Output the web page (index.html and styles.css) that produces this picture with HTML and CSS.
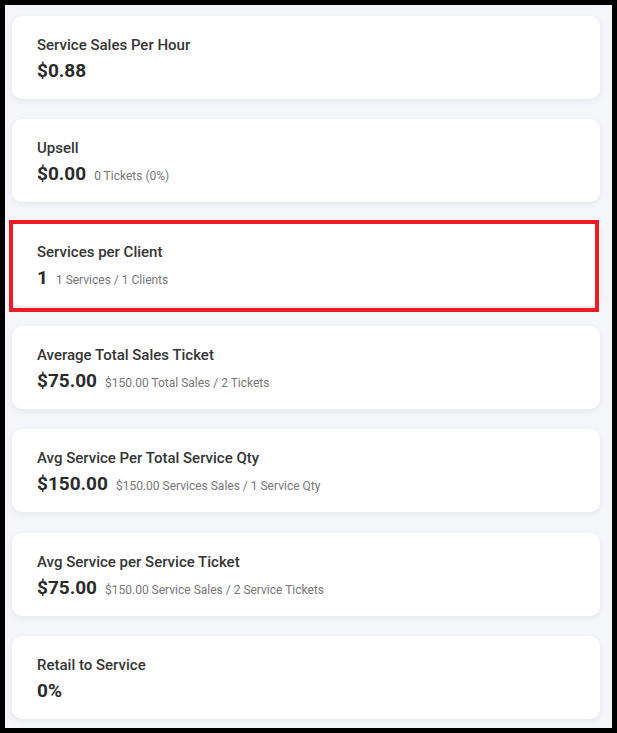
FILE: index.html
```html
<!DOCTYPE html>
<html lang="en">
<head>
  <meta charset="UTF-8" />
  <meta name="viewport" content="width=device-width, initial-scale=1.0" />
  <title>Sales Metrics</title>
  <link rel="stylesheet" href="styles.css">
</head>
<body>
  <div class="screen">
    <div class="metric-list">
      <div class="metric-card">
        <div class="metric-title">Service Sales Per Hour</div>
        <div class="metric-row">
          <span class="metric-value">$0.88</span>
        </div>
      </div>

      <div class="metric-card">
        <div class="metric-title">Upsell</div>
        <div class="metric-row">
          <span class="metric-value">$0.00</span>
          <span class="metric-note">0 Tickets (0%)</span>
        </div>
      </div>

      <div class="metric-card highlighted">
        <div class="metric-title">Services per Client</div>
        <div class="metric-row">
          <span class="metric-value">1</span>
          <span class="metric-note">1 Services / 1 Clients</span>
        </div>
      </div>

      <div class="metric-card">
        <div class="metric-title">Average Total Sales Ticket</div>
        <div class="metric-row">
          <span class="metric-value">$75.00</span>
          <span class="metric-note">$150.00 Total Sales / 2 Tickets</span>
        </div>
      </div>

      <div class="metric-card">
        <div class="metric-title">Avg Service Per Total Service Qty</div>
        <div class="metric-row">
          <span class="metric-value">$150.00</span>
          <span class="metric-note">$150.00 Services Sales / 1 Service Qty</span>
        </div>
      </div>

      <div class="metric-card">
        <div class="metric-title">Avg Service per Service Ticket</div>
        <div class="metric-row">
          <span class="metric-value">$75.00</span>
          <span class="metric-note">$150.00 Service Sales / 2 Service Tickets</span>
        </div>
      </div>

      <div class="metric-card">
        <div class="metric-title">Retail to Service</div>
        <div class="metric-row">
          <span class="metric-value">0%</span>
        </div>
      </div>
    </div>
  </div>
</body>
</html>
```

FILE: styles.css
```css
html, body {
  margin: 0;
  height: 100%;
}

body {
  background: #000;
  padding: 5px;
  box-sizing: border-box;
  font-family: Roboto, 'Liberation Sans', sans-serif;
  color: #2b2b2b;
}

.screen {
  background-color: #f5f6fa;
  height: 723px;
  width: 607px;
  overflow: hidden;
  padding: 11px 12px 0 7px;
  box-sizing: border-box;
}

.metric-list {
  display: flex;
  flex-direction: column;
  gap: 20.33px;
}

.metric-card {
  position: relative;
  background-color: #fff;
  border-radius: 10px;
  box-shadow: 0 2px 6px rgba(40, 50, 90, 0.08);
  padding: 19px 25px 0 25px;
  height: 83px;
  box-sizing: border-box;
}

.metric-card.highlighted::after {
  content: "";
  position: absolute;
  top: -3px;
  left: -3px;
  right: 1px;
  bottom: -6px;
  border: 4px solid #ed1c24;
}

.metric-title {
  font-size: 15px;
  font-weight: 500;
  line-height: 20px;
  color: #353535;
}

.metric-row {
  display: flex;
  align-items: baseline;
  gap: 8px;
  margin-top: 5px;
}

.metric-value {
  font-size: 19px;
  font-weight: 700;
  line-height: 22px;
  color: #2b2b2b;
}

.metric-note {
  font-size: 12px;
  color: #777;
}
```
